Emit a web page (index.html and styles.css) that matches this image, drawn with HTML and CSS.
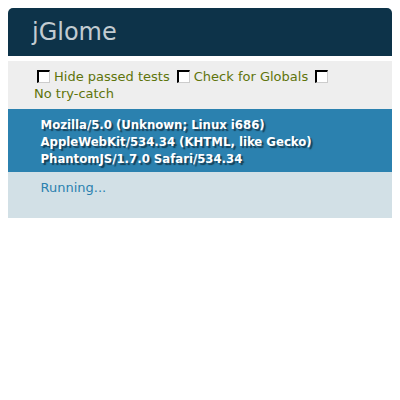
FILE: index.html
```html
<!DOCTYPE html>
<html>
<head>
<meta charset="utf-8">
<link rel="stylesheet" href="styles.css">
</head>
<body>
<h1 class="header"><a class="header-link" href="#">jGlome</a></h1>
<div class="banner"></div>
<div class="toolbar">
  <label class="opt"><span class="cb"></span>Hide passed tests</label>
  <label class="opt"><span class="cb"></span>Check for Globals</label>
  <span class="cb"></span>
  <label class="opt">No try-catch</label>
</div>
<h2 class="useragent">Mozilla/5.0 (Unknown; Linux i686) AppleWebKit/534.34 (KHTML, like Gecko) PhantomJS/1.7.0 Safari/534.34</h2>
<p class="result">Running...</p>
</body>
</html>
```
FILE: styles.css
```css
html, body {
  margin: 0;
  padding: 0;
  background: #fff;
}
body {
  margin: 8px;
  font-family: "DejaVu Sans", Verdana, sans-serif;
}
.header {
  margin: 0;
  padding: 12px 0 12px 24px;
  background-color: #0d3349;
  font-size: 24px;
  line-height: 24px;
  font-weight: normal;
  border-radius: 5px 5px 0 0;
}
.header-link {
  color: #c2ccd1;
  text-decoration: none;
}
.banner {
  height: 5px;
}
.toolbar {
  padding: 6.5px 0 6.5px 26px;
  background-color: #eee;
  color: #5e740b;
  font-size: 13px;
  line-height: 17.5px;
}
.opt {
  white-space: nowrap;
}
.cb {
  display: inline-block;
  width: 13px;
  height: 13px;
  box-sizing: border-box;
  margin: 0 4px 0 3px;
  vertical-align: -2px;
  background: #fff;
  border-top: 2px solid #000;
  border-left: 2px solid #000;
  border-right: 1px solid #ccc;
  border-bottom: 1px solid #ccc;
}
.useragent {
  margin: 0;
  padding: 6.5px 0 5.5px 32.5px;
  background-color: #2b81af;
  color: #fff;
  font-family: "DejaVu Sans Condensed", "DejaVu Sans", sans-serif;
  font-size: 13px;
  line-height: 17px;
  font-weight: bold;
  text-shadow: rgba(0, 0, 0, 0.5) 2px 2px 1px;
}
.result {
  margin: 0;
  padding: 6.5px 6.5px 6.5px 32.5px;
  height: 33px;
  background-color: #d2e0e6;
  color: #2b81af;
  font-size: 13px;
  line-height: 17px;
  border-bottom: 1px solid #fff;
}
```
